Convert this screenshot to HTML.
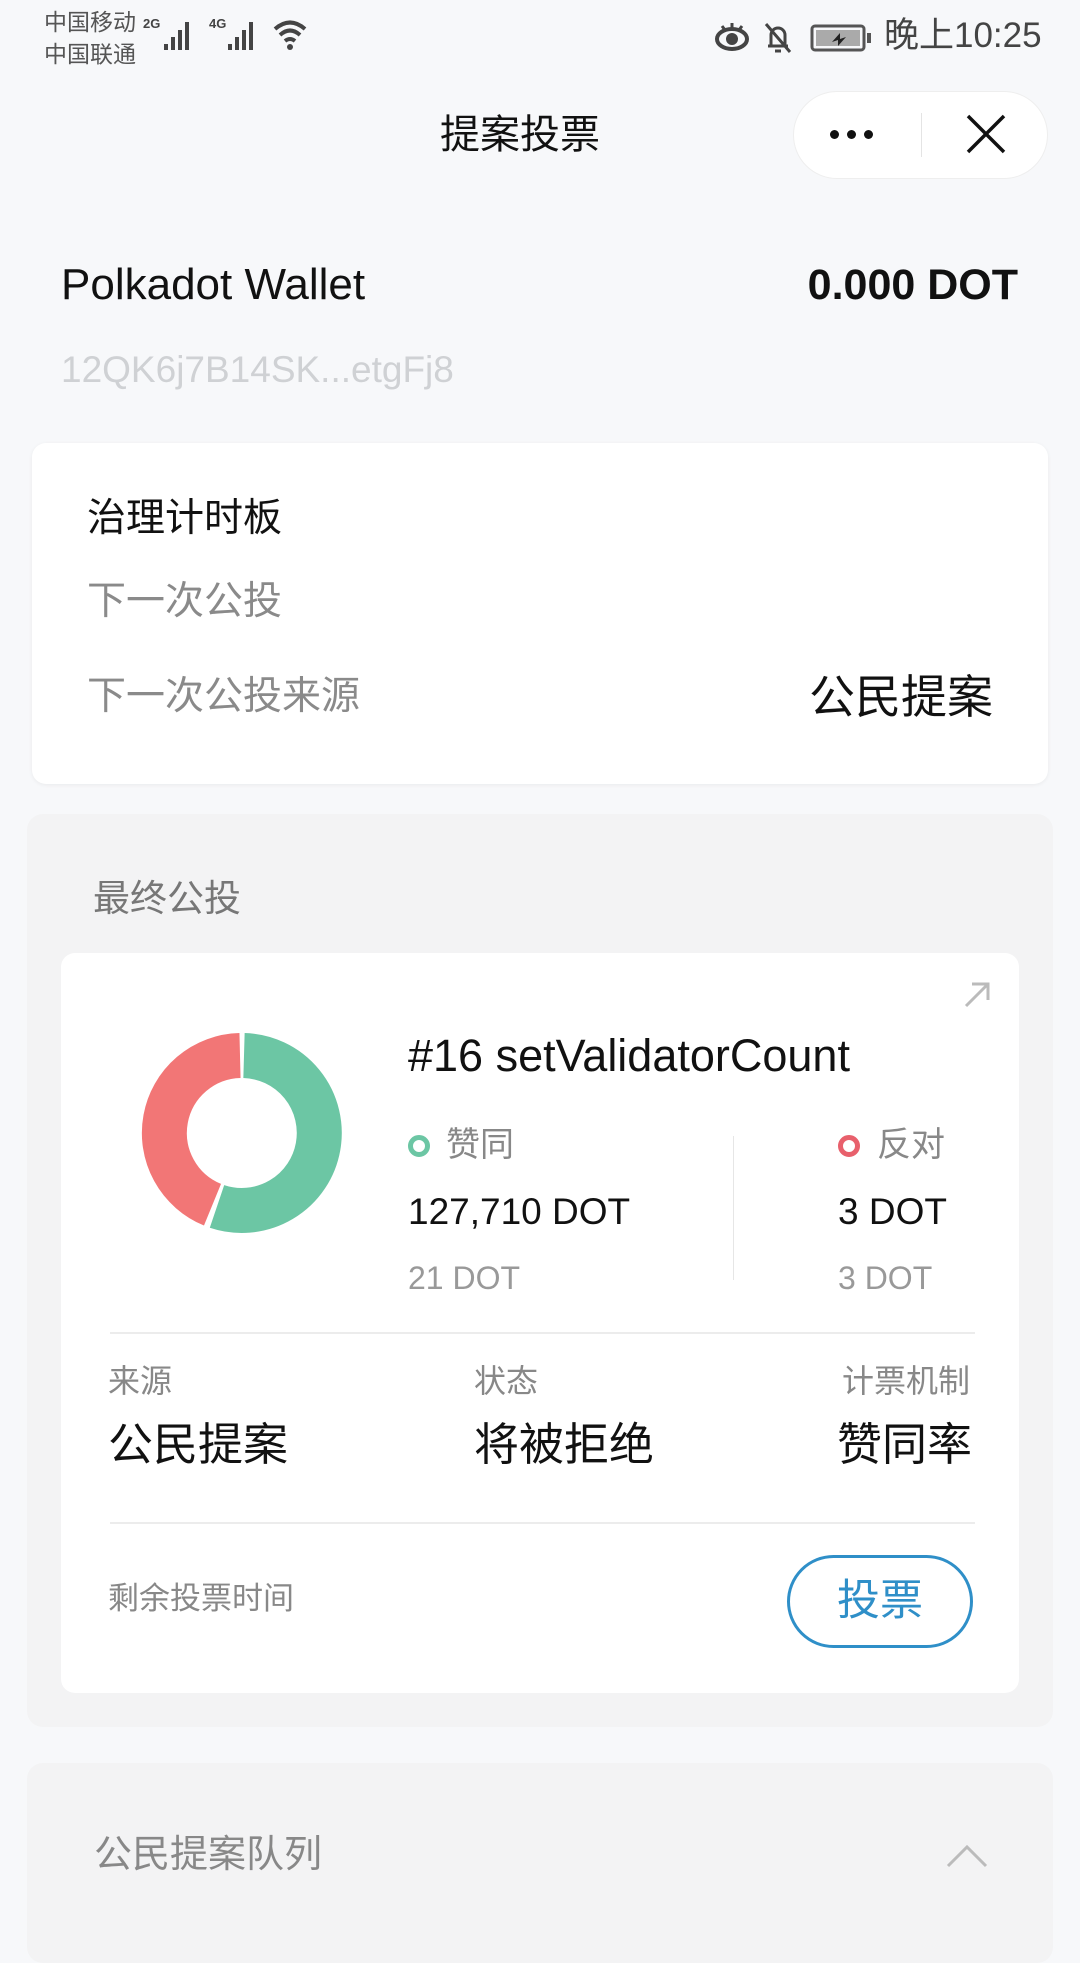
<!DOCTYPE html>
<html><head><meta charset="utf-8"><style>
*{margin:0;padding:0;box-sizing:border-box}
body{width:1080px;height:1920px;background:#f7f8fa;position:relative;overflow:hidden;font-family:"Liberation Sans","Noto Sans CJK SC",sans-serif;color:#111}
.a{position:absolute;white-space:nowrap}
.card{position:absolute;background:#fff;border-radius:14px}
</style></head><body>
<div class="a" style="left:44px;top:8px;font-size:23px;color:#555;line-height:28px">中国移动</div>
<div class="a" style="left:44px;top:40px;font-size:23px;color:#555;line-height:28px">中国联通</div>
<div class="a" style="left:143px;top:16px;font-size:13px;font-weight:bold;color:#444">2G</div>
<svg class="a" style="left:162px;top:18px" width="36" height="34"><g fill="#444"><rect x="2" y="26" width="4" height="6"/><rect x="9" y="19" width="4" height="13"/><rect x="16" y="12" width="4" height="20"/><rect x="23" y="4" width="4" height="28"/></g></svg>
<div class="a" style="left:209px;top:16px;font-size:13px;font-weight:bold;color:#444">4G</div>
<svg class="a" style="left:226px;top:18px" width="36" height="34"><g fill="#444"><rect x="2" y="26" width="4" height="6"/><rect x="9" y="19" width="4" height="13"/><rect x="16" y="12" width="4" height="20"/><rect x="23" y="4" width="4" height="28"/></g></svg>
<svg class="a" style="left:272px;top:18px" width="40" height="34"><g fill="none" stroke="#444" stroke-width="4"><path d="M3 11 Q18 -2 33 11"/><path d="M8 17 Q18 8 28 17"/><path d="M13 23 Q18 19 23 23"/></g><circle cx="18" cy="29" r="3" fill="#444"/></svg>
<svg class="a" style="left:714px;top:20px" width="36" height="34"><ellipse cx="18" cy="19" rx="15" ry="10" fill="none" stroke="#444" stroke-width="4"/><circle cx="18" cy="19" r="6" fill="#444"/><path d="M8 6l3 4M18 3v5M28 6l-3 4" stroke="#444" stroke-width="3"/></svg>
<svg class="a" style="left:762px;top:20px" width="32" height="36"><path d="M6 26h20M9 26V15a7 7 0 0114 0v11M13 31h6M4 4l24 28" fill="none" stroke="#444" stroke-width="3"/></svg>
<svg class="a" style="left:810px;top:24px" width="64" height="28"><rect x="2" y="2" width="52" height="24" rx="3" fill="none" stroke="#555" stroke-width="3"/><rect x="6" y="6" width="44" height="16" fill="#aaa"/><rect x="57" y="9" width="4" height="10" fill="#555"/><path d="M22 18l8-9v6l6-2-8 9v-6z" fill="#222"/></svg>
<div class="a" style="left:884px;top:16px;font-size:35px;color:#444;line-height:40px">晚上10:25</div>
<div class="a" style="left:440px;top:112px;font-size:40px;line-height:46px;color:#111">提案投票</div>
<div class="a" style="left:793px;top:91px;width:255px;height:88px;border-radius:44px;background:#fff;border:1px solid #eee"></div>
<div class="a" style="left:830px;top:126px"><span style="display:inline-block;width:9px;height:9px;border-radius:50%;background:#111;margin-right:8px"></span><span style="display:inline-block;width:9px;height:9px;border-radius:50%;background:#111;margin-right:8px"></span><span style="display:inline-block;width:9px;height:9px;border-radius:50%;background:#111"></span></div>
<div class="a" style="left:921px;top:113px;width:1px;height:44px;background:#e4e4e4"></div>
<svg class="a" style="left:964px;top:112px" width="44" height="44"><path d="M4 4L40 40M40 4L4 40" stroke="#111" stroke-width="3.5"/></svg>
<div class="a" style="left:61px;top:260px;font-size:44px;line-height:50px">Polkadot Wallet</div>
<div class="a" style="right:62px;top:261px;font-size:43px;line-height:48px;font-weight:bold">0.000 DOT</div>
<div class="a" style="left:61px;top:349px;font-size:37px;line-height:42px;color:#cfd1d4">12QK6j7B14SK...etgFj8</div>

<div class="card" style="left:32px;top:443px;width:1016px;height:341px;box-shadow:0 1px 4px rgba(0,0,0,.06)"></div>
<div class="a" style="left:87px;top:498px;font-size:39px;line-height:42px">治理计时板</div>
<div class="a" style="left:87px;top:581px;font-size:39px;line-height:42px;color:#8a8a8a">下一次公投</div>
<div class="a" style="left:87px;top:676px;font-size:39px;line-height:42px;color:#8a8a8a">下一次公投来源</div>
<div class="a" style="right:87px;top:672px;font-size:46px;line-height:50px">公民提案</div>

<div class="a" style="left:27px;top:814px;width:1026px;height:913px;background:#f3f3f4;border-radius:16px"></div>
<div class="a" style="left:93px;top:878px;font-size:37px;line-height:42px;color:#777">最终公投</div>
<div class="card" style="left:61px;top:953px;width:958px;height:740px"></div>
<svg class="a" style="left:962px;top:980px" width="30" height="30"><path d="M4 26L26 4M10 4h16v16" fill="none" stroke="#bbb" stroke-width="3"/></svg>
<svg class="a" style="left:132px;top:1023px" width="220" height="220"><g transform="translate(110,110)" fill="none" stroke-width="45"><path d="M2 -77.5A77.5 77.5 0 1 1 -25 73.4" stroke="#6cc6a4"/><path d="M-29.5 71.7A77.5 77.5 0 0 1 -2 -77.5" stroke="#f27676"/></g></svg>
<div class="a" style="left:408px;top:1031px;font-size:45px;line-height:50px">#16 setValidatorCount</div>
<div class="a" style="left:408px;top:1135px;width:22px;height:22px;border:5px solid #6cc6a4;border-radius:50%"></div>
<div class="a" style="left:446px;top:1125px;font-size:34px;line-height:40px;color:#888">赞同</div>
<div class="a" style="left:408px;top:1190px;font-size:37px;line-height:44px">127,710 DOT</div>
<div class="a" style="left:408px;top:1259px;font-size:32px;line-height:38px;color:#999">21 DOT</div>
<div class="a" style="left:733px;top:1136px;width:1px;height:144px;background:#e6e6e6"></div>
<div class="a" style="left:838px;top:1135px;width:22px;height:22px;border:5px solid #e8606c;border-radius:50%"></div>
<div class="a" style="left:877px;top:1125px;font-size:34px;line-height:40px;color:#888">反对</div>
<div class="a" style="left:838px;top:1190px;font-size:37px;line-height:44px">3 DOT</div>
<div class="a" style="left:838px;top:1259px;font-size:32px;line-height:38px;color:#999">3 DOT</div>
<div class="a" style="left:110px;top:1332px;width:865px;height:2px;background:#ececec"></div>
<div class="a" style="left:108px;top:1362px;font-size:32px;line-height:38px;color:#888">来源</div>
<div class="a" style="left:474px;top:1362px;font-size:32px;line-height:38px;color:#888">状态</div>
<div class="a" style="right:110px;top:1362px;font-size:32px;line-height:38px;color:#888">计票机制</div>
<div class="a" style="left:108px;top:1420px;font-size:45px;line-height:50px">公民提案</div>
<div class="a" style="left:474px;top:1420px;font-size:45px;line-height:50px">将被拒绝</div>
<div class="a" style="right:108px;top:1420px;font-size:45px;line-height:50px">赞同率</div>
<div class="a" style="left:110px;top:1522px;width:865px;height:2px;background:#ececec"></div>
<div class="a" style="left:108px;top:1581px;font-size:31px;line-height:36px;color:#888">剩余投票时间</div>
<div class="a" style="left:787px;top:1555px;width:186px;height:93px;border:3px solid #2f8fc8;border-radius:47px;color:#2f8fc8;font-size:43px;line-height:87px;text-align:center">投票</div>

<div class="a" style="left:27px;top:1763px;width:1026px;height:200px;background:#f3f3f4;border-radius:16px"></div>
<div class="a" style="left:94px;top:1834px;font-size:38px;line-height:42px;color:#888">公民提案队列</div>
<svg class="a" style="left:946px;top:1843px" width="42" height="26"><path d="M2 23L21 4L40 23" fill="none" stroke="#bbb" stroke-width="3"/></svg>
</body></html>
